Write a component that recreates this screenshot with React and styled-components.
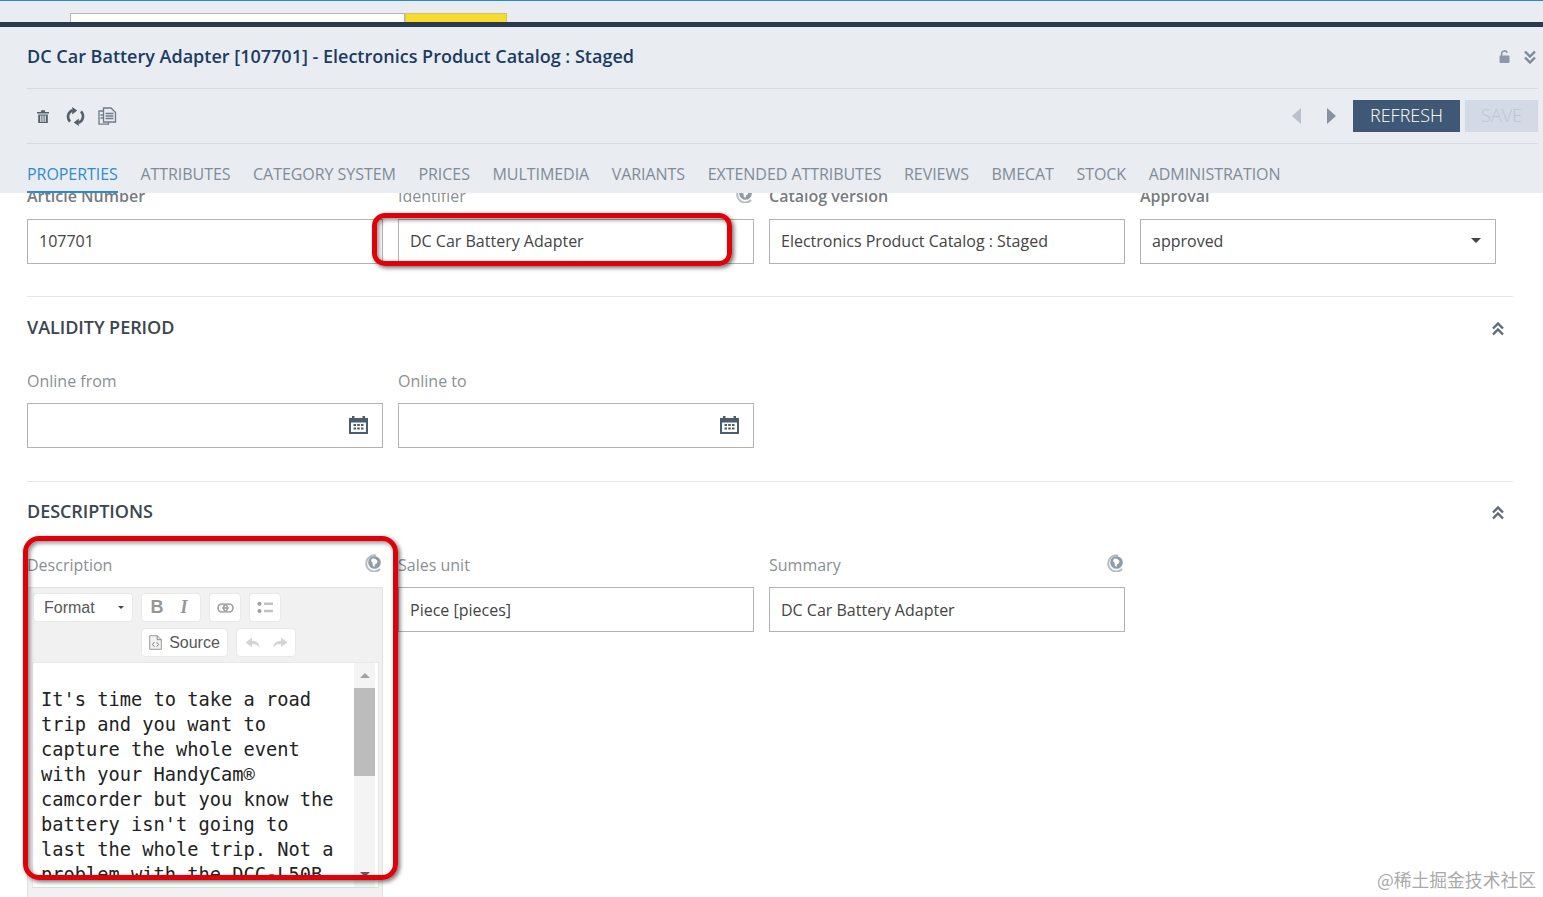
import React from "react";
import styled, { createGlobalStyle } from "styled-components";

const GlobalStyle = createGlobalStyle`
  html, body {
    margin: 0;
    padding: 0;
    background: #fff;
    font-family: "Open Sans", "Liberation Sans", sans-serif;
  }
`;

const Page = styled.div`
  position: relative;
  width: 1543px;
  height: 897px;
  overflow: hidden;
  display: flex;
  flex-direction: column;
  background: #fff;
`;

const TopStrip = styled.div`
  height: 22px;
  box-sizing: border-box;
  flex: none;
  display: flex;
  align-items: flex-end;
  padding-left: 70px;
  background: #e9edf1;
  border-top: 1px solid #2a8bd0;
`;

const StripInput = styled.div`
  width: 335px;
  height: 9px;
  box-sizing: border-box;
  background: #fff;
  border: 1px solid #b4b4b4;
  border-bottom: 0;
`;

const StripButton = styled.div`
  width: 102px;
  height: 9px;
  box-sizing: border-box;
  background: #f6dc2f;
  border: 1px solid #d8c35a;
  border-bottom: 0;
`;

const DarkBand = styled.div`
  height: 5px;
  flex: none;
  background: #2a3b4e;
`;

const Header = styled.header`
  flex: none;
  height: 166px;
  box-sizing: border-box;
  padding: 0 5px 0 27px;
  background: #e9edf1;
  display: flex;
  flex-direction: column;
`;

const TitleRow = styled.div`
  height: 62px;
  box-sizing: border-box;
  padding: 0 2px 2px 0;
  display: flex;
  align-items: center;
  justify-content: space-between;
  border-bottom: 1px solid #d7dbdf;
`;

const Title = styled.h1`
  margin: 0 0 2px;
  font-size: 18px;
  font-weight: 600;
  color: #1c3b63;
`;

const IconRow = styled.div`
  display: flex;
  align-items: center;
`;

const IconSlot = styled.span`
  display: block;
  margin-left: ${(p) => p.$ml || 0}px;
`;

const ToolRow = styled.div`
  height: 55px;
  box-sizing: border-box;
  display: flex;
  align-items: center;
  justify-content: space-between;
  padding-left: 10px;
  border-bottom: 1px solid #d7dbdf;
`;

const Nav = styled.div`
  display: flex;
  align-items: center;
`;

const Arrow = styled.div`
  width: 0;
  height: 0;
  border-top: 8px solid transparent;
  border-bottom: 8px solid transparent;
  ${(p) =>
    p.$left
      ? "border-right: 9px solid #bac1ca; margin-right: 26px;"
      : "border-left: 9px solid #87919f; margin-right: 17px;"}
`;

const ActionButton = styled.div`
  height: 32px;
  box-sizing: border-box;
  padding-bottom: 3px;
  display: flex;
  align-items: center;
  justify-content: center;
  width: ${(p) => (p.$disabled ? 73 : 107)}px;
  margin-left: ${(p) => (p.$disabled ? 5 : 0)}px;
  background: ${(p) => (p.$disabled ? "#d3dae6" : "#3f5875")};
  color: ${(p) => (p.$disabled ? "#bcc6d6" : "#fff")};
  font-size: 18px;
  font-weight: 300;
`;

const Tabs = styled.nav`
  flex: 1;
  display: flex;
  gap: 22.6px;
`;

const Tab = styled.div`
  height: 49px;
  box-sizing: border-box;
  padding-top: 19px;
  font-size: 16px;
  line-height: 22px;
  letter-spacing: -0.05px;
  font-weight: 400;
  white-space: nowrap;
  color: ${(p) => (p.$active ? "#2f8bd0" : "#808b97")};
  border-bottom: 2px solid ${(p) => (p.$active ? "#2f8bd0" : "transparent")};
`;

const ContentClip = styled.main`
  flex: 1;
  min-height: 0;
  overflow: hidden;
`;

const Content = styled.div`
  margin-top: -7px;
  padding-left: 27px;
  width: 1486px;
`;

const FieldGrid = styled.div`
  display: grid;
  grid-template-columns: repeat(4, 356px);
  column-gap: 15px;
  align-items: start;
`;

const LabelRow = styled.div`
  height: 20px;
  margin-bottom: ${(p) => (p.$tall ? 13 : 12)}px;
  display: flex;
  align-items: center;
  justify-content: space-between;
`;

const Label = styled.label`
  font-size: 16px;
  font-weight: ${(p) => (p.$strong ? 600 : 400)};
  color: ${(p) => (p.$strong ? "#777b80" : "#8b8f94")};
`;

const LocaleSlot = styled.span`
  display: block;
  margin: -4px 1px 0 0;
`;

const Input = styled.div`
  height: 45px;
  box-sizing: border-box;
  padding: 0 12px ${(p) => (p.$low ? 0 : 2)}px 11px;
  display: flex;
  align-items: center;
  justify-content: space-between;
  background: #fff;
  border: 1px solid #b2b2b2;
  font-size: 16px;
  color: #444;
`;

const Caret = styled.span`
  width: 0;
  height: 0;
  margin-right: 2px;
  border-left: 5px solid transparent;
  border-right: 5px solid transparent;
  border-top: 5px solid #444;
`;

const CalendarSlot = styled.span`
  display: block;
  margin-left: auto;
  margin-right: 2px;
`;

const Divider = styled.hr`
  margin: ${(p) => p.$top}px 0 0;
  height: 1px;
  border: 0;
  background: #e6e6e6;
`;

const SectionHead = styled.div`
  height: 24px;
  margin: ${(p) => p.$top}px 0 32px;
  padding-right: 9px;
  display: flex;
  align-items: center;
  justify-content: space-between;
`;

const SectionTitle = styled.h2`
  margin: 0;
  font-size: 18px;
  font-weight: 600;
  letter-spacing: -0.05px;
  color: #3a4550;
`;

const CollapseSlot = styled.span`
  display: block;
  margin-top: 3px;
`;

const Editor = styled.div`
  box-sizing: border-box;
  height: 340px;
  padding: 5px 5px 0 5px;
  background: #f1f1f1;
  border: 1px solid #e2e2e2;
`;

const ToolbarLine = styled.div`
  height: 29px;
  margin-bottom: ${(p) => (p.$last ? 5 : 6)}px;
  display: flex;
  gap: 8px;
  padding-left: ${(p) => p.$indent || 0}px;
`;

const ToolGroup = styled.div`
  width: ${(p) => p.$w}px;
  box-sizing: border-box;
  padding: 0 ${(p) => p.$pad ?? 0}px;
  display: flex;
  align-items: center;
  justify-content: ${(p) => p.$justify || "center"};
  gap: ${(p) => p.$gap || 0}px;
  background: #fff;
  border: 1px solid #e9e9e9;
  border-radius: 4px;
  font-family: "Liberation Sans", Arial, sans-serif;
  font-size: 16px;
  color: #585858;
`;

const FormatGroup = styled(ToolGroup)`
  padding-right: 9px;
`;

const StyleGroup = styled(ToolGroup)`
  padding-right: 4px;
`;

const SmallCaret = styled.span`
  width: 0;
  height: 0;
  margin-right: -1px;
  border-left: 3px solid transparent;
  border-right: 3px solid transparent;
  border-top: 3px solid #444;
`;

const Bold = styled.span`
  font-family: "Liberation Sans", sans-serif;
  font-weight: 700;
  font-size: 18px;
  color: #969696;
`;

const Italic = styled.span`
  font-family: "Liberation Serif", serif;
  font-weight: 700;
  font-style: italic;
  font-size: 18px;
  color: #969696;
`;

const EditorBody = styled.div`
  height: 226px;
  margin: 0 -2px 0 -1px;
  box-sizing: border-box;
  padding: 24px 0 0 8px;
  display: flex;
  justify-content: space-between;
  background: #fff;
  border: 1px solid #e8e8e8;
  border-bottom-color: #dcdcdc;
`;

const EditorText = styled.div`
  width: 300px;
  height: 193px;
  overflow: hidden;
  font-family: "DejaVu Sans Mono", monospace;
  font-size: 18.7px;
  line-height: 25px;
  color: #222;
`;

const ScrollTrack = styled.div`
  position: relative;
  width: 21px;
  margin: -24px 3px 0 0;
  background: #f4f4f4;
`;

const ScrollThumb = styled.div`
  position: absolute;
  top: 25px;
  left: 0;
  right: 0;
  height: 88px;
  background: #bcbcbc;
`;

const ScrollArrow = styled.span`
  position: absolute;
  left: 6px;
  width: 0;
  height: 0;
  border-left: 5px solid transparent;
  border-right: 5px solid transparent;
  ${(p) =>
    p.$down
      ? "top: 209px; border-top: 5px solid #5f5f5f;"
      : "top: 10px; border-bottom: 5px solid #a2a2a2;"}
`;

/* red marks drawn over the screenshot */
const Callout = styled.div`
  position: absolute;
  box-sizing: border-box;
  left: ${(p) => p.$x}px;
  top: ${(p) => p.$y}px;
  width: ${(p) => p.$w}px;
  height: ${(p) => p.$h}px;
  border: 5px solid #e20008;
  border-radius: ${(p) => p.$r}px;
  box-shadow: 2px 2px 4px rgba(0, 0, 0, 0.55), inset 2px 2px 4px rgba(0, 0, 0, 0.45);
`;

const Watermark = styled.div`
  position: absolute;
  right: 7px;
  bottom: 7px;
  font-family: "Noto Sans CJK SC", "Liberation Sans", sans-serif;
  font-size: 17.8px;
  line-height: 22px;
  color: #a9a9a9;
`;

const Svg = ({ w, h, vb, children }) => (
  <svg width={w} height={h} viewBox={vb} style={{ display: "block", flex: "none" }}>
    {children}
  </svg>
);

const TrashIcon = () => (
  <Svg w={12} h={13} vb="0 0 12 13">
    <path fill="#54606c" d="M0 2h12v1.6H0zM4 .2h4V2H4zM1.2 4.4h9.6V13H1.2z" />
    <path fill="#e9edf1" d="M3.2 5.5h1.2V12H3.2zM5.4 5.5h1.2V12H5.4zM7.6 5.5h1.2V12H7.6z" />
  </Svg>
);

const SyncIcon = () => (
  <Svg w={19} h={19} vb="0 0 19 19">
    <path fill="none" stroke="#54606c" strokeWidth="2.6" d="M6.5 3.2C1.6 5.2 .6 11 4 14.6" />
    <path fill="none" stroke="#54606c" strokeWidth="2.6" d="M12.5 15.8c4.9-2 5.9-7.8 2.5-11.4" />
    <path fill="#54606c" d="M6.2 0l5 3.6-5 3.8zM12.8 19l-5-3.6 5-3.8z" />
  </Svg>
);

const CopyIcon = () => (
  <Svg w={19} h={19} vb="0 0 19 19">
    <path fill="none" stroke="#6f7a86" strokeWidth="1.3" d="M5 4H1v13.2h9.5V15" />
    <path fill="#e9edf1" stroke="#6f7a86" strokeWidth="1.3" d="M5.5 1h7.5l4.5 4.5V15h-12z" />
    <path stroke="#6f7a86" strokeWidth="1.3" d="M7.5 6.5h8M7.5 9h8M7.5 11.5h8M2.5 8h3M2.5 11h3" />
  </Svg>
);

const LockIcon = () => (
  <Svg w={11} h={13} vb="0 0 11 13">
    <path fill="none" stroke="#8d97a5" strokeWidth="1.6" d="M2.6 6V3.6a2.9 2.9 0 0 1 5.6-.8" />
    <rect x="0.5" y="5.5" width="10" height="7.5" rx="1" fill="#8d97a5" />
  </Svg>
);

const Chevrons = ({ up, color = "#5f6a76" }) => (
  <Svg w={12} h={14} vb="0 0 12 14">
    <path
      fill="none"
      stroke={color}
      strokeWidth="2.4"
      d={up ? "M1 6.5l5-5 5 5M1 12.5l5-5 5 5" : "M1 1.5l5 5 5-5M1 7.5l5 5 5-5"}
    />
  </Svg>
);

const CalendarIcon = () => (
  <Svg w={19} h={19} vb="0 0 19 19">
    <path
      fill="#4b5c6c"
      fillRule="evenodd"
      d="M0 3h3V1h2.5v2h8V1H16v2h3v16H0zM2 7.5V17h15V7.5z"
    />
    <path fill="#4b5c6c" d="M4.5 9H7v2H4.5zM8.2 9h2.6v2H8.2zM12 9h2.5v2H12zM4.5 12.5H7v2H4.5zM8.2 12.5h2.6v2H8.2zM12 12.5h2.5v2H12z" />
  </Svg>
);

const LocaleIcon = () => (
  <Svg w={18} h={18} vb="0 0 18 18">
    <path fill="none" stroke="#b5bcc3" strokeWidth="2" d="M16 15A8 8 0 1 1 12 1.6" />
    <circle cx="10.5" cy="8.5" r="6.3" fill="#8f9ba7" />
    <path fill="#fff" d="M8 4.5l3 .2 2.6 2.3-1 2.4-1.6 1-.6 2.6-1.6-1.4-.3-2.8L7 7z" />
  </Svg>
);

const LinkIcon = () => (
  <Svg w={17} h={10} vb="0 0 17 10">
    <rect x="1" y="1" width="9.5" height="8" rx="4" fill="none" stroke="#a3a3a3" strokeWidth="1.7" />
    <rect x="6.5" y="1" width="9.5" height="8" rx="4" fill="none" stroke="#a3a3a3" strokeWidth="1.7" />
    <path stroke="#a3a3a3" strokeWidth="1.6" d="M5 5h7" />
  </Svg>
);

const ListIcon = () => (
  <Svg w={16} h={13} vb="0 0 16 13">
    <circle cx="2.5" cy="2.8" r="2.1" fill="#a0a0a0" />
    <circle cx="2.5" cy="10" r="2.1" fill="#a0a0a0" />
    <path fill="#c2c2c2" d="M7 1.5h9v2.4H7zM7 8.8h9v2.4H7z" />
  </Svg>
);

const SourceIcon = () => (
  <Svg w={13} h={15} vb="0 0 13 15">
    <path fill="#f2f2f2" stroke="#9a9a9a" d="M.7.7h7.6l4 4v9.6H.7z" />
    <path fill="none" stroke="#8a8a8a" d="M8.2.7v4h4" />
    <path fill="none" stroke="#777" d="M5.4 7.2L3.4 9.5l2 2.3M7.6 7.2l2 2.3-2 2.3" />
  </Svg>
);

const UndoIcon = ({ flip }) => (
  <Svg w={16} h={12} vb="0 0 16 12">
    <path
      fill="#d4d4d4"
      transform={flip ? "translate(16 0) scale(-1 1)" : undefined}
      d="M7 .5L.5 5.5 7 10.2V7c3.5 0 5.8.8 8 4.2C14.4 6.5 11.8 4 7 3.8z"
    />
  </Svg>
);

const tabs = [
  "PROPERTIES",
  "ATTRIBUTES",
  "CATEGORY SYSTEM",
  "PRICES",
  "MULTIMEDIA",
  "VARIANTS",
  "EXTENDED ATTRIBUTES",
  "REVIEWS",
  "BMECAT",
  "STOCK",
  "ADMINISTRATION",
];

const description =
  "It's time to take a road trip and you want to capture the whole event with your HandyCam® camcorder but you know the battery isn't going to last the whole trip. Not a problem with the DCC-L50B";

const Field = ({ label, strong, locale, tall, children }) => (
  <div>
    <LabelRow $tall={tall}>
      <Label $strong={strong}>{label}</Label>
      {locale && (
        <LocaleSlot>
          <LocaleIcon />
        </LocaleSlot>
      )}
    </LabelRow>
    {children}
  </div>
);

const Collapse = () => (
  <CollapseSlot>
    <Chevrons up />
  </CollapseSlot>
);

export default function App() {
  return (
    <Page>
      <GlobalStyle />
      <TopStrip>
        <StripInput />
        <StripButton />
      </TopStrip>
      <DarkBand />
      <Header>
        <TitleRow>
          <Title>DC Car Battery Adapter [107701] - Electronics Product Catalog : Staged</Title>
          <IconRow>
            <LockIcon />
            <IconSlot $ml={14}>
              <Chevrons color="#7d8894" />
            </IconSlot>
          </IconRow>
        </TitleRow>
        <ToolRow>
          <IconRow>
            <TrashIcon />
            <IconSlot $ml={17}>
              <SyncIcon />
            </IconSlot>
            <IconSlot $ml={13}>
              <CopyIcon />
            </IconSlot>
          </IconRow>
          <Nav>
            <Arrow $left />
            <Arrow />
            <ActionButton>REFRESH</ActionButton>
            <ActionButton $disabled>SAVE</ActionButton>
          </Nav>
        </ToolRow>
        <Tabs>
          {tabs.map((t, i) => (
            <Tab key={t} $active={i === 0}>
              {t}
            </Tab>
          ))}
        </Tabs>
      </Header>
      <ContentClip>
        <Content>
          <FieldGrid>
            <Field label="Article Number" strong tall>
              <Input>107701</Input>
            </Field>
            <Field label="Identifier" locale tall>
              <Input>DC Car Battery Adapter</Input>
            </Field>
            <Field label="Catalog version" strong tall>
              <Input>Electronics Product Catalog : Staged</Input>
            </Field>
            <Field label="Approval" strong tall>
              <Input>
                approved
                <Caret />
              </Input>
            </Field>
          </FieldGrid>
          <Divider $top={32} />
          <SectionHead $top={18}>
            <SectionTitle>VALIDITY PERIOD</SectionTitle>
            <Collapse />
          </SectionHead>
          <FieldGrid>
            <Field label="Online from">
              <Input>
                <CalendarSlot>
                  <CalendarIcon />
                </CalendarSlot>
              </Input>
            </Field>
            <Field label="Online to">
              <Input>
                <CalendarSlot>
                  <CalendarIcon />
                </CalendarSlot>
              </Input>
            </Field>
          </FieldGrid>
          <Divider $top={33} />
          <SectionHead $top={17}>
            <SectionTitle>DESCRIPTIONS</SectionTitle>
            <Collapse />
          </SectionHead>
          <FieldGrid>
            <Field label="Description" locale>
              <Editor>
                <ToolbarLine>
                  <FormatGroup $w={100} $pad={10} $justify="space-between">
                    Format
                    <SmallCaret />
                  </FormatGroup>
                  <StyleGroup $w={60} $gap={17}>
                    <Bold>B</Bold>
                    <Italic>I</Italic>
                  </StyleGroup>
                  <ToolGroup $w={32}>
                    <LinkIcon />
                  </ToolGroup>
                  <ToolGroup $w={32}>
                    <ListIcon />
                  </ToolGroup>
                </ToolbarLine>
                <ToolbarLine $indent={108} $last>
                  <ToolGroup $w={87} $gap={7}>
                    <SourceIcon />
                    Source
                  </ToolGroup>
                  <ToolGroup $w={60} $gap={11}>
                    <UndoIcon />
                    <UndoIcon flip />
                  </ToolGroup>
                </ToolbarLine>
                <EditorBody>
                  <EditorText>{description}</EditorText>
                  <ScrollTrack>
                    <ScrollArrow />
                    <ScrollThumb />
                    <ScrollArrow $down />
                  </ScrollTrack>
                </EditorBody>
              </Editor>
            </Field>
            <Field label="Sales unit">
              <Input $low>Piece [pieces]</Input>
            </Field>
            <Field label="Summary" locale>
              <Input $low>DC Car Battery Adapter</Input>
            </Field>
          </FieldGrid>
        </Content>
      </ContentClip>
      <Callout $x={372} $y={213} $w={360} $h={53} $r={13} />
      <Callout $x={23} $y={536} $w={375} $h={344} $r={16} />
      <Watermark>@稀土掘金技术社区</Watermark>
    </Page>
  );
}
